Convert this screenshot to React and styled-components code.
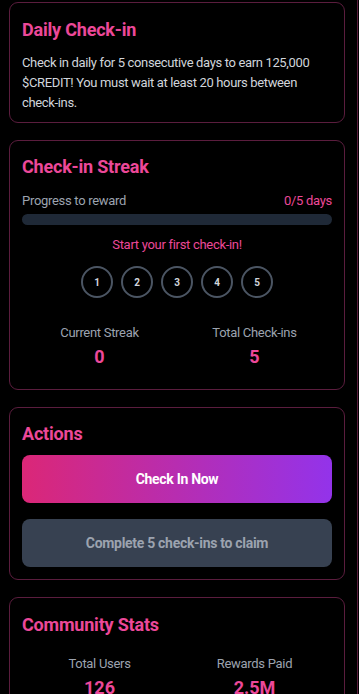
import React from "react";
import styled, { createGlobalStyle } from "styled-components";

const GlobalStyle = createGlobalStyle`
    html, body {
        margin: 0;
        padding: 0;
        background: #000;
    }
    body {
        font-family: Roboto, "Noto Sans", sans-serif;
        -webkit-font-smoothing: antialiased;
    }
`;

const Page = styled.div`
    width: 358px;
    box-sizing: border-box;
    border-right: 1px solid #5b1d3e;
    padding: 2px 0 40px 9px;
    display: flex;
    flex-direction: column;
    gap: 17px;
`;

const Card = styled.section`
    width: 336px;
    box-sizing: border-box;
    border: 1px solid #5b1d3e;
    border-radius: 9px;
    background: #000;
    padding: ${(p) => p.$pad || "14px 12px 16px"};
`;

const Title = styled.h2`
    margin: 0 0 ${(p) => p.$gap || "10px"};
    font-size: 18px;
    line-height: 26px;
    font-weight: 700;
    color: #ec4899;
    letter-spacing: -0.2px;
`;

const Text = styled.p`
    margin: 0;
    font-size: 13px;
    line-height: 20px;
    color: #d1d5db;
    letter-spacing: -0.35px;
`;

const ProgressHead = styled.div`
    display: flex;
    justify-content: space-between;
    font-size: 13px;
    line-height: 18px;
    color: #9ca3af;
    letter-spacing: -0.3px;
    margin-bottom: 4px;
`;

const Pink = styled.span`
    color: #ec4899;
`;

const Track = styled.div`
    height: 11px;
    border-radius: 6px;
    background: #1f2937;
    overflow: hidden;
`;

const Fill = styled.div`
    height: 100%;
    background: linear-gradient(90deg, #db2777, #9333ea);
`;

const Hint = styled.div`
    text-align: center;
    margin-top: 11px;
    font-size: 13px;
    line-height: 18px;
    color: #ec4899;
    letter-spacing: -0.3px;
`;

const Days = styled.div`
    display: flex;
    justify-content: center;
    gap: 8px;
    margin-top: 12px;
`;

const Day = styled.div`
    width: 32px;
    height: 32px;
    box-sizing: border-box;
    border-radius: 50%;
    border: 2px solid ${(p) => (p.$done ? "#ec4899" : "#4b5563")};
    display: flex;
    align-items: center;
    justify-content: center;
    font-size: 10px;
    font-weight: 700;
    color: #d1d5db;
`;

const Stats = styled.div`
    display: grid;
    grid-template-columns: 1fr 1fr;
    margin-top: ${(p) => p.$top || "26px"};
    text-align: center;
`;

const Label = styled.div`
    font-size: 13px;
    line-height: 18px;
    color: #9ca3af;
    letter-spacing: -0.3px;
`;

const Value = styled.div`
    margin-top: 4px;
    font-size: 18px;
    line-height: 22px;
    font-weight: 700;
    color: #ec4899;
`;

const Buttons = styled.div`
    display: flex;
    flex-direction: column;
    gap: 16px;
`;

const Button = styled.button`
    height: 48px;
    width: 100%;
    border: none;
    border-radius: 8px;
    font-family: inherit;
    font-size: 14px;
    font-weight: 700;
    letter-spacing: -0.3px;
    color: ${(p) => (p.disabled ? "#9ca3af" : "#fff")};
    background: ${(p) =>
        p.disabled ? "#374151" : "linear-gradient(90deg, #db2777, #9333ea)"};
    cursor: ${(p) => (p.disabled ? "not-allowed" : "pointer")};
`;

const streak = 0;

export default function App() {
    return (
        <>
            <GlobalStyle />
            <Page>
                <Card $pad="14px 12px 9px">
                    <Title>Daily Check-in</Title>
                    <Text>
                        Check in daily for 5 consecutive days to earn 125,000 $CREDIT! You
                        must wait at least 20 hours between check-ins.
                    </Text>
                </Card>

                <Card $pad="13px 12px 21px">
                    <Title $gap="12px">Check-in Streak</Title>
                    <ProgressHead>
                        <span>Progress to reward</span>
                        <Pink>{streak}/5 days</Pink>
                    </ProgressHead>
                    <Track>
                        <Fill style={{ width: `${(streak / 5) * 100}%` }} />
                    </Track>
                    <Hint>Start your first check-in!</Hint>
                    <Days>
                        {[1, 2, 3, 4, 5].map((d) => (
                            <Day key={d} $done={d <= streak}>
                                {d}
                            </Day>
                        ))}
                    </Days>
                    <Stats>
                        <div>
                            <Label>Current Streak</Label>
                            <Value>0</Value>
                        </div>
                        <div>
                            <Label>Total Check-ins</Label>
                            <Value>5</Value>
                        </div>
                    </Stats>
                </Card>

                <Card $pad="13px 12px 12px">
                    <Title $gap="8px">Actions</Title>
                    <Buttons>
                        <Button>Check In Now</Button>
                        <Button disabled>Complete 5 check-ins to claim</Button>
                    </Buttons>
                </Card>

                <Card>
                    <Title>Community Stats</Title>
                    <Stats $top="17px">
                        <div>
                            <Label>Total Users</Label>
                            <Value>126</Value>
                        </div>
                        <div>
                            <Label>Rewards Paid</Label>
                            <Value>2.5M</Value>
                        </div>
                    </Stats>
                </Card>
            </Page>
        </>
    );
}
